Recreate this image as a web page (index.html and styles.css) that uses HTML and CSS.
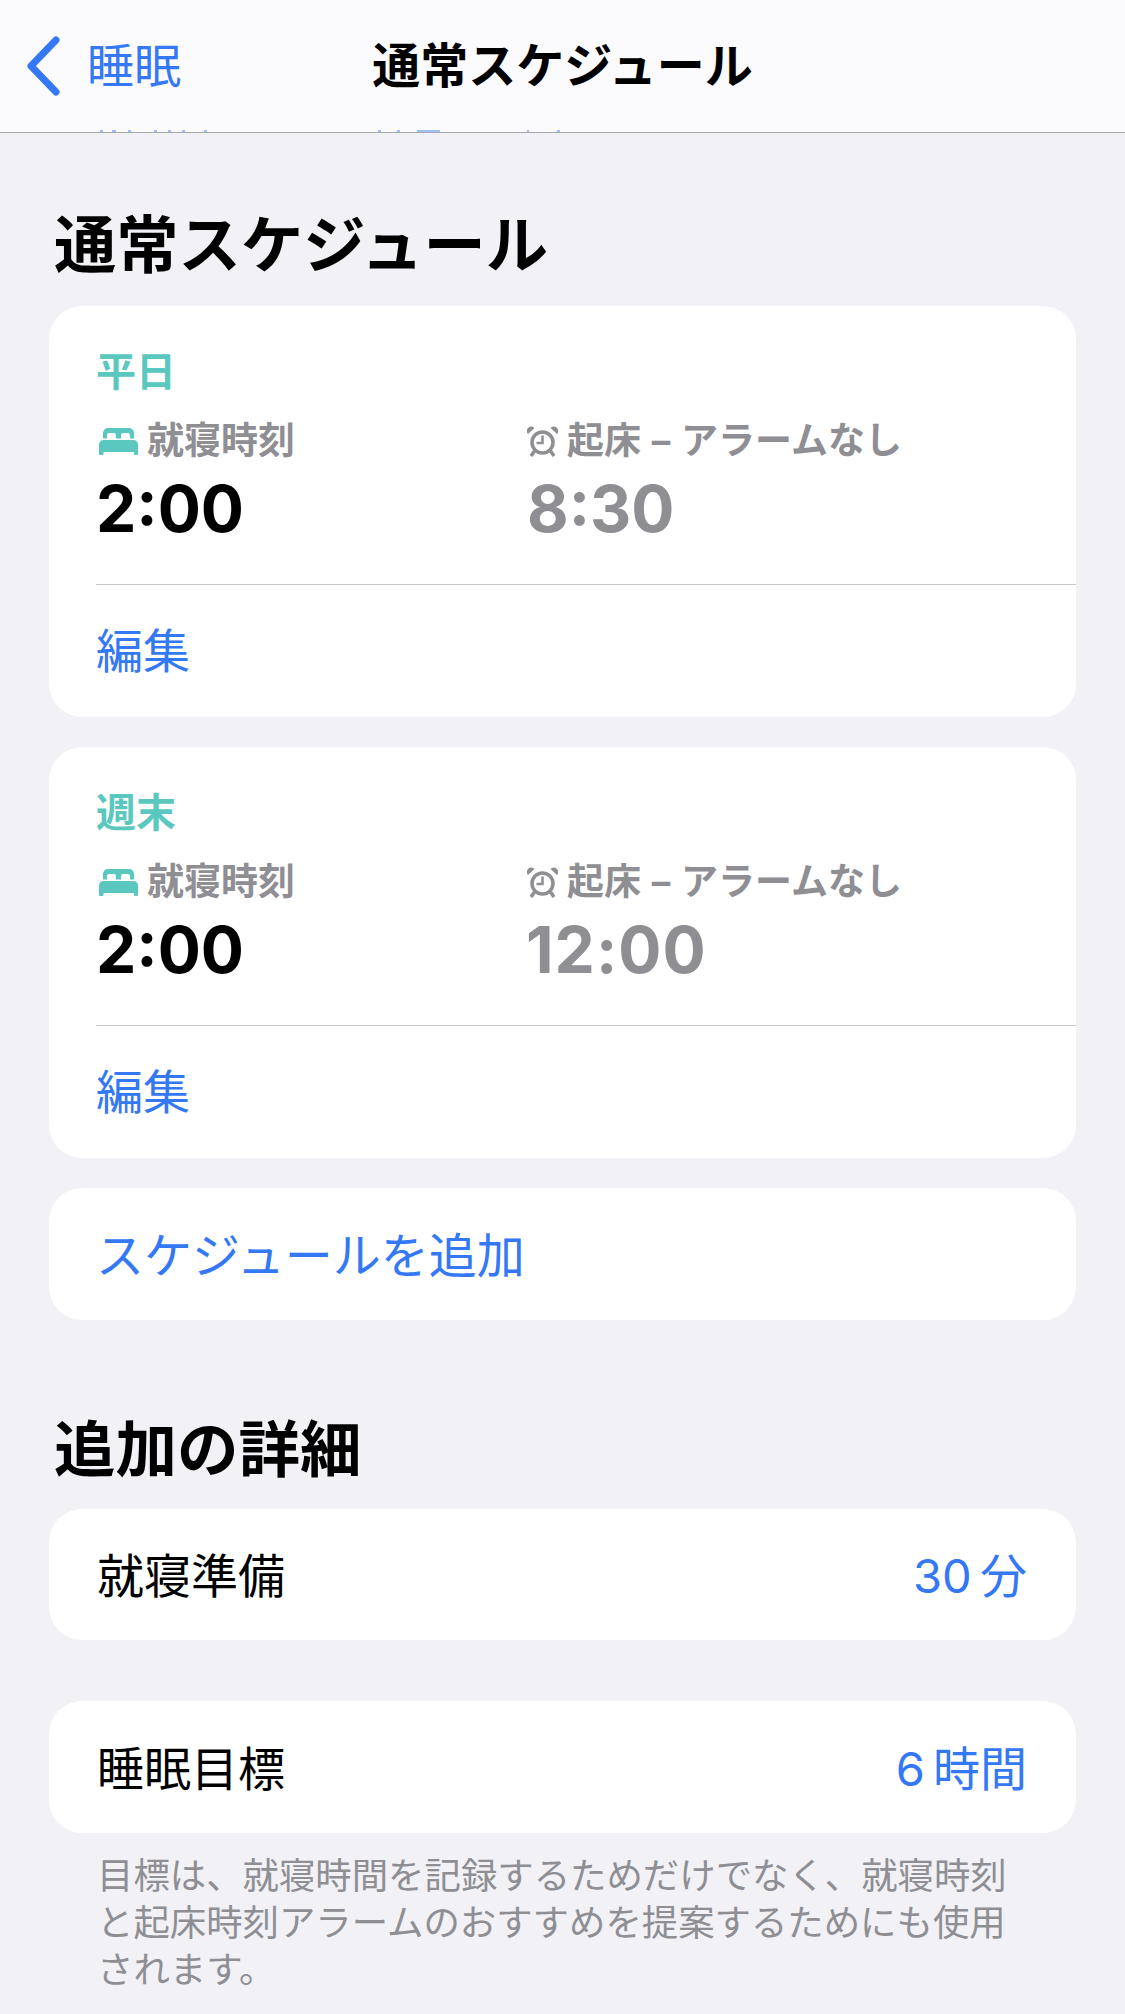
FILE: index.html
```html
<!DOCTYPE html>
<html lang="ja">
<head>
<meta charset="utf-8">
<title>通常スケジュール</title>
<link rel="stylesheet" href="styles.css">
</head>
<body>
<header class="nav">
  <div class="nav-back">
    <svg class="chevron" viewBox="0 0 36 60" aria-hidden="true"><path d="M31 4 L6 30 L31 56"/></svg>
    <span>睡眠</span>
  </div>
  <div class="nav-title">通常スケジュール</div>
  <svg class="nav-peek" viewBox="0 0 480 2" aria-hidden="true"><path d="M20 0h3v2h-3zM32 0h4v2h-4zM48 0h3v2h-3zM74 0h3v2h-3zM88 0h3v2h-3zM102 0h3v2h-3zM124 0h3v2h-3zM298 0h3v2h-3zM317 0h3v2h-3zM337 0h23v2h-23zM447 0h2v2h-2zM477 0h3v2h-3z"/></svg>
</header>
<main class="content">
  <h2 class="section-title first">通常スケジュール</h2>
  <section class="card sched">
    <div class="sched-body">
      <div class="sched-name">平日</div>
      <div class="sched-grid">
        <div>
          <div class="label">
            <svg class="bed" viewBox="0 0 39 27"><path d="M9 0h21a5 5 0 0 1 5 5v5.500h-4V7a2 2 0 0 0-2-2h-5a2 2 0 0 0-2 2v3.500h-5V7a2 2 0 0 0-2-2h-5a2 2 0 0 0-2 2v3.500H4V5a5 5 0 0 1 5-5zM4.500 12h30a4.500 4.500 0 0 1 4.500 4.500V26a1 1 0 0 1-1 1h-2a1 1 0 0 1-1-1v-2H4.500v2a1 1 0 0 1-1 1H1a1 1 0 0 1-1-1v-9.500A4.500 4.500 0 0 1 4.500 12z"/></svg>
            <span>就寝時刻</span>
          </div>
          <div class="time">2:00</div>
        </div>
        <div>
          <div class="label">
            <svg class="alarm" viewBox="0 0 31 31"><circle cx="15.500" cy="16.500" r="10.500"/><path class="hand" d="M15.500 9.500v7.500h-6"/><path class="fill" d="M1 8 7.500 2A4.300 4.300 0 0 0 1 8zM30 8 23.500 2A4.300 4.300 0 0 1 30 8z"/><path d="M7.500 25 4 30M23.500 25l3.500 5"/></svg>
            <span class="wake">起床 – アラームなし</span>
          </div>
          <div class="time muted">8:30</div>
        </div>
      </div>
    </div>
    <div class="edit">編集</div>
  </section>
  <section class="card sched">
    <div class="sched-body">
      <div class="sched-name">週末</div>
      <div class="sched-grid">
        <div>
          <div class="label">
            <svg class="bed" viewBox="0 0 39 27"><path d="M9 0h21a5 5 0 0 1 5 5v5.500h-4V7a2 2 0 0 0-2-2h-5a2 2 0 0 0-2 2v3.500h-5V7a2 2 0 0 0-2-2h-5a2 2 0 0 0-2 2v3.500H4V5a5 5 0 0 1 5-5zM4.500 12h30a4.500 4.500 0 0 1 4.500 4.500V26a1 1 0 0 1-1 1h-2a1 1 0 0 1-1-1v-2H4.500v2a1 1 0 0 1-1 1H1a1 1 0 0 1-1-1v-9.500A4.500 4.500 0 0 1 4.500 12z"/></svg>
            <span>就寝時刻</span>
          </div>
          <div class="time">2:00</div>
        </div>
        <div>
          <div class="label">
            <svg class="alarm" viewBox="0 0 31 31"><circle cx="15.500" cy="16.500" r="10.500"/><path class="hand" d="M15.500 9.500v7.500h-6"/><path class="fill" d="M1 8 7.500 2A4.300 4.300 0 0 0 1 8zM30 8 23.500 2A4.300 4.300 0 0 1 30 8z"/><path d="M7.500 25 4 30M23.500 25l3.500 5"/></svg>
            <span class="wake">起床 – アラームなし</span>
          </div>
          <div class="time muted wide">12:00</div>
        </div>
      </div>
    </div>
    <div class="edit">編集</div>
  </section>
  <section class="card row add"><span class="link">スケジュールを追加</span></section>
  <h2 class="section-title second">追加の詳細</h2>
  <section class="card row between"><span>就寝準備</span><span class="link value">30 分</span></section>
  <section class="card row between goal"><span>睡眠目標</span><span class="link value">6 時間</span></section>
  <p class="note">目標は、就寝時間を記録するためだけでなく、就寝時刻と起床時刻アラームのおすすめを提案するためにも使用されます。</p>
</main>
</body>
</html>
```
FILE: styles.css
```css
* { box-sizing: border-box; }
html, body { margin: 0; padding: 0; }
body {
  width: 1125px;
  height: 2014px;
  overflow: hidden;
  background: #f1f1f6;
  color: #000;
  font-family: Inter, "Noto Sans CJK JP", sans-serif;
}
.nav {
  position: relative;
  height: 133px;
  background: #fbfbfe;
  border-bottom: 1px solid #a8a8ac;
  display: flex;
  align-items: center;
  justify-content: center;
}
.nav-back {
  position: absolute;
  left: 25px;
  top: 36px;
  display: flex;
  align-items: center;
  gap: 26px;
  color: #3478f6;
  font-size: 47px;
  line-height: 60px;
}
.chevron { width: 36px; height: 60px; }
.chevron path {
  fill: none;
  stroke: #3478f6;
  stroke-width: 7px;
  stroke-linecap: round;
  stroke-linejoin: round;
}
.nav-title {
  font-size: 48px;
  font-weight: 700;
  line-height: 60px;
  margin-top: 0;
}
.nav-peek {
  position: absolute;
  left: 80px;
  bottom: 0;
  width: 480px;
  height: 2px;
  fill: #3478f6;
  opacity: .45;
}
.content { padding: 0 49px; }
.section-title {
  margin: 0;
  font-size: 62.300px;
  font-weight: 700;
  line-height: 80px;
  padding-left: 5px;
}
.section-title.first { margin-top: 73px; margin-bottom: 20px; }
.section-title.second { margin-top: 90px; margin-bottom: 19px; font-size: 61.500px; }
.card {
  background: #fff;
  border-radius: 33px;
}
.sched { height: 411px; margin-bottom: 30px; }
.sched-body {
  height: 279px;
  margin-left: 47px;
  padding-top: 41px;
  border-bottom: 1px solid #c6c6c8;
}
.sched-name {
  color: #5ac8bf;
  font-size: 40px;
  font-weight: 700;
  line-height: 50px;
}
.sched-grid {
  display: grid;
  grid-template-columns: 431px 1fr;
  margin-top: 19px;
}
.label {
  display: flex;
  align-items: center;
  color: #8e8e93;
  font-size: 37px;
  font-weight: 700;
  line-height: 50px;
  height: 50px;
}
.wake { word-spacing: 2px; }
.bed { width: 39px; height: 27px; margin: 0 9px 0 3px; fill: #5ac8bf; }
.alarm { width: 31px; height: 31px; margin-right: 9px; fill: none; stroke: #8e8e93; stroke-width: 3.500px; }
.alarm .hand { stroke-width: 2.500px; }
.alarm .fill { fill: #8e8e93; stroke: none; }
.time {
  font-size: 64px;
  font-weight: 700;
  line-height: 80px;
  margin-top: 3px;
}
.time.muted { color: #8e8e93; }
.time.wide { letter-spacing: 1px; margin-left: -1px; }
.edit {
  margin-left: 47px;
  color: #3478f6;
  font-size: 47px;
  line-height: 132px;
  height: 129px;
}
.row {
  display: flex;
  align-items: center;
  height: 131px;
  padding: 0 49px 4px 48px;
  font-size: 47px;
}
.add { height: 132px; font-size: 48px; padding-left: 47px; }
.between { justify-content: space-between; }
.goal { margin-top: 61px; height: 132px; }
.link { color: #3478f6; }
.value { word-spacing: -5px; }
.note {
  margin: 20px 0 0;
  padding: 0 38px 0 48px;
  color: #8e8e93;
  font-size: 36.400px;
  line-height: 47px;
}
```
